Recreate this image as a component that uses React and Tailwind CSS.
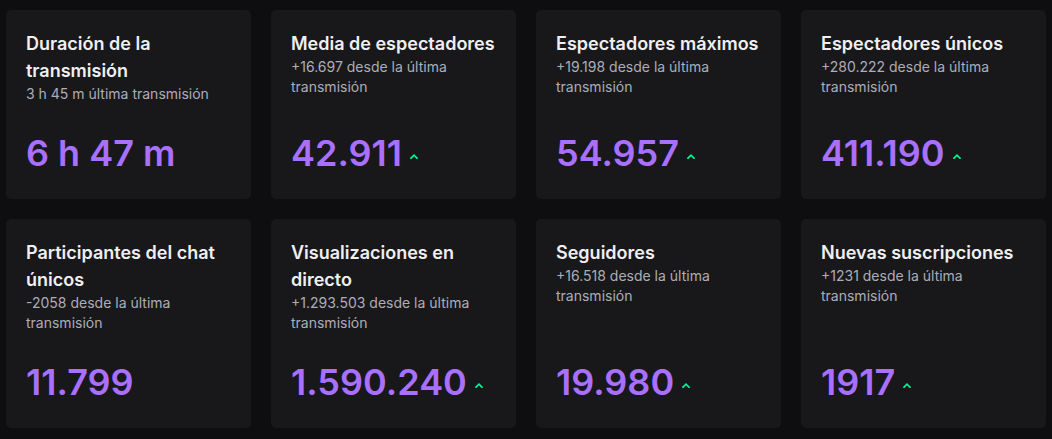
import React from "react";

const cards = [
  { title: "Duración de la transmisión", sub: "3 h 45 m última transmisión", value: "6 h 47 m", up: false },
  { title: "Media de espectadores", sub: "+16.697 desde la última transmisión", value: "42.911", up: true },
  { title: "Espectadores máximos", sub: "+19.198 desde la última transmisión", value: "54.957", up: true },
  { title: "Espectadores únicos", sub: "+280.222 desde la última transmisión", value: "411.190", up: true },
  { title: "Participantes del chat únicos", sub: "-2058 desde la última transmisión", value: "11.799", up: false },
  { title: "Visualizaciones en directo", sub: "+1.293.503 desde la última transmisión", value: "1.590.240", up: true },
  { title: "Seguidores", sub: "+16.518 desde la última transmisión", value: "19.980", up: true },
  { title: "Nuevas suscripciones", sub: "+1231 desde la última transmisión", value: "1917", up: true },
];

function Chevron() {
  return (
    <svg width="8" height="5" viewBox="0 0 8 5" className="ml-[8px] mb-[12px] shrink-0" fill="none">
      <polyline points="1,4.2 4,1.2 7,4.2" stroke="#00f593" strokeWidth="1.7" strokeLinecap="square" />
    </svg>
  );
}

export default function App() {
  return (
    <div
      className="min-h-[439px] w-full bg-[#0e0e10] px-[6px] pt-[10px] pb-[10px]"
      style={{ fontFamily: "Inter, 'Noto Sans', sans-serif" }}
    >
      <div className="grid grid-cols-4 gap-5">
        {cards.map((c, i) => (
          <div key={i} className="flex flex-col rounded-[5px] bg-[#18181b] px-5 pt-5 pb-[28px]">
            <div>
              <div className="text-[18px] leading-[27px] font-semibold text-[#efeff1]">{c.title}</div>
              <div className="text-[14px] leading-[20px] text-[#adadb8]">{c.sub}</div>
            </div>
            <div className="mt-auto flex items-end pt-[31px]">
              <span className="text-[36px] leading-[36px] font-semibold text-[#a970ff] whitespace-nowrap">{c.value}</span>
              {c.up && <Chevron />}
            </div>
          </div>
        ))}
      </div>
    </div>
  );
}
